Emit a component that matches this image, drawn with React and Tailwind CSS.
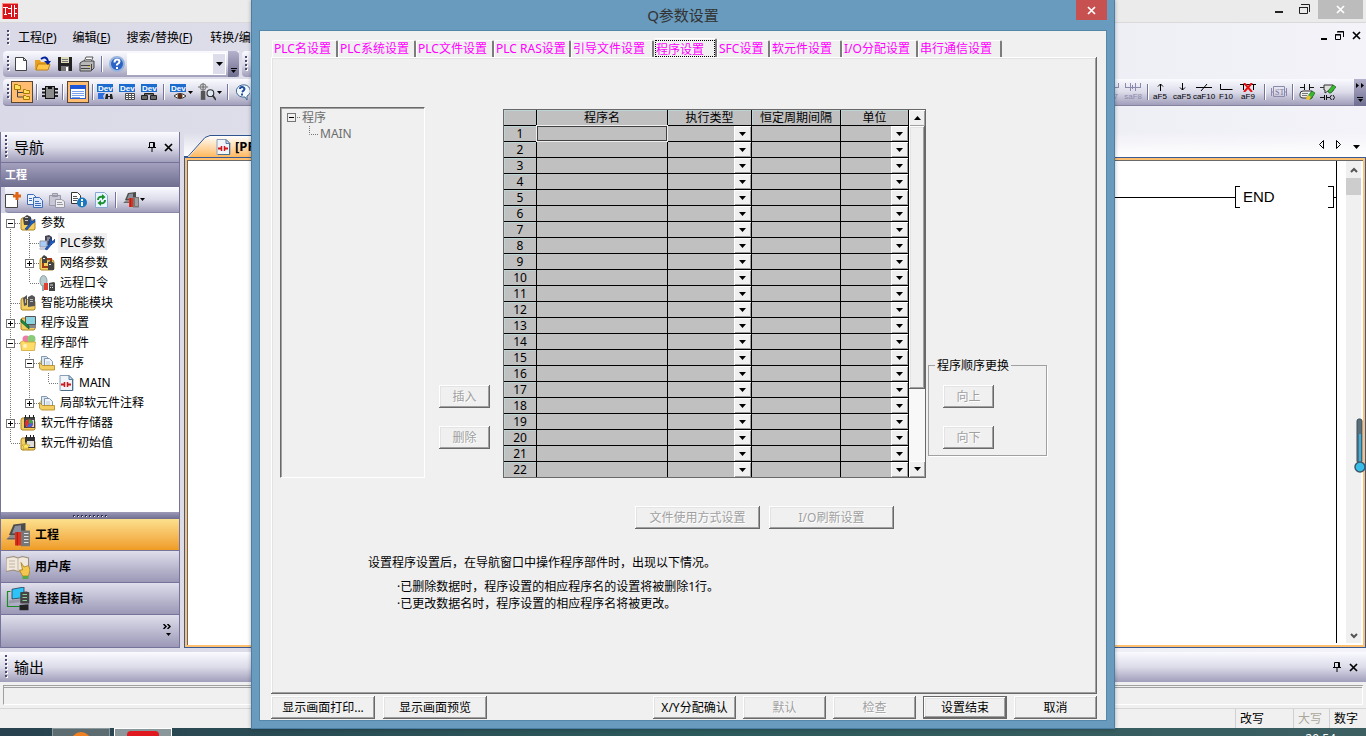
import React, { useState } from "react";

const menuItems = [
  ["工程", "P"],
  ["编辑", "E"],
  ["搜索/替换", "F"],
];

const treeRows = [
  { label: "参数", cells: ["b-"], icon: "param" },
  { label: "PLC参数", cells: ["v", "t"], icon: "plc", selected: true },
  { label: "网络参数", cells: ["v", "t+"], icon: "network" },
  { label: "远程口令", cells: ["v", "l"], icon: "remote" },
  { label: "智能功能模块", cells: ["t"], icon: "module" },
  { label: "程序设置", cells: ["t+"], icon: "setting" },
  { label: "程序部件", cells: ["t-"], icon: "parts" },
  { label: "程序", cells: ["v", "t-"], icon: "folder" },
  { label: "MAIN", cells: ["v", "v", "l"], icon: "ladder" },
  { label: "局部软元件注释", cells: ["v", "l+"], icon: "folder" },
  { label: "软元件存储器", cells: ["t+"], icon: "memory" },
  { label: "软元件初始值", cells: ["l"], icon: "initial" },
];

const tabs = [
  { label: "PLC名设置", width: "w-[66px]" },
  { label: "PLC系统设置", width: "w-[78px]" },
  { label: "PLC文件设置", width: "w-[78px]" },
  { label: "PLC RAS设置", width: "w-[77px]" },
  { label: "引导文件设置", width: "w-[83px]" },
  { label: "程序设置", width: "w-[63px]" },
  { label: "SFC设置", width: "w-[53px]" },
  { label: "软元件设置", width: "w-[72px]" },
  { label: "I/O分配设置", width: "w-[76px]" },
  { label: "串行通信设置", width: "w-[84px]" },
];

const ladderKeys = [
  { text: "aF5", d: "M8.500 8V1M6 3.500l2.500-2.500 2.500 2.500" },
  { text: "caF5", d: "M8.500 0v7M6 4.500l2.500 2.500 2.500-2.500" },
  { text: "caF10", d: "M0 4.500h16M5 8l6-7" },
  { text: "F10", d: "M2.500 1v5.500h12" },
  { text: "aF9", d: "M0 1.500h16M3.500 1v6M13.500 1v6", cross: true },
];

const barBg = "bg-linear-to-b from-[#fafaff] via-[#dcdcea] to-[#a09eba]";
const raised =
  "shadow-[inset_-1px_-1px_#696969,inset_1px_1px_#fff,inset_-2px_-2px_#a0a0a0,inset_2px_2px_#e3e3e3]";

/* ---------- icons ---------- */

function Folder() {
  return (
    <path d="M1 7V5l1-2h4l2 2h6l1 2v7l-1 1H2l-1-1z" fill="#f3cf62" stroke="#b08420" />
  );
}

function Icon({ name, size = 16 }) {
  const art = {
    app: (
      <>
        <rect width="16" height="16" fill="#d8141c" />
        <path d="M0 0h16v1H1v15H0z" fill="#ff8a80" />
        <path d="M1 4.500h5M3.500 5v7M2 11.500h3M6 5.500h4M12 5.500h3M6 10.500h4M12 10.500h3M9.500 2v12M12.500 2v12" stroke="#fff" fill="none" />
      </>
    ),
    newFile: (
      <path d="M2.500 1.500h8l3 3v10h-11zM10.500 1.500v3h3" fill="#fff" stroke="#444" />
    ),
    open: (
      <>
        <path d="M0 4h5l1 2h7v8H0z" fill="#e8a020" />
        <path d="M1 14l2-6h12l-2 6z" fill="#ffc64a" stroke="#c07f14" />
        <path d="M6 3q5-4 7 2" fill="none" stroke="#00249c" strokeWidth="2" />
        <path d="M9 5h7l-3 4z" fill="#00249c" />
      </>
    ),
    save: (
      <>
        <path d="M1 1h14v14H2l-1-1z" fill="#222" />
        <rect x="4" y="1" width="8" height="6" fill="#dcdcb8" />
        <path d="M5 3.500h6M5 5.500h6" stroke="#777" />
        <rect x="4" y="10" width="8" height="5" fill="#777" />
        <rect x="9" y="11" width="2" height="4" fill="#fff" />
      </>
    ),
    print: (
      <>
        <path d="M5 6l2-5h7l-2 5z" fill="#fff" stroke="#555" />
        <path d="M7 3.500h5" stroke="#777" />
        <path d="M1 7l3-2h11v7l-3 3H1z" fill="#b8b8b8" stroke="#444" />
        <path d="M2 9.500h9M2 12.500h9M12.500 8v6" stroke="#444" />
        <rect x="9" y="10" width="2" height="1" fill="#e8c020" />
      </>
    ),
    help: (
      <>
        <circle cx="8" cy="8" r="7" fill="#2b64c4" stroke="#9ab4dc" strokeWidth="2" />
        <path d="M5.500 6.500q0-3 2.500-3t2.500 2q0 1.500-2.500 3v1M8 11v2" fill="none" stroke="#fff" strokeWidth="2" />
      </>
    ),
    treeView: (
      <>
        <path d="M3.500 5v8H9M3.500 8.500H9" stroke="#444" fill="none" />
        <path d="M.5.5h3l1 1h2v4h-6zM9.500 5.500h2l1 1h3v3h-6zM9.500 11.500h2l1 1h3v3h-6z" fill="#ffe060" stroke="#a87800" />
      </>
    ),
    chip: (
      <>
        <path d="M0 5h16M0 8.500h16M0 12h16" stroke="#222" strokeWidth="2" />
        <rect x="3.500" y="2.500" width="9" height="12" fill="#8b8b8b" stroke="#111" />
        <path d="M6 2h4v3H6z" fill="#111" />
      </>
    ),
    windowList: (
      <>
        <rect x=".5" y="1.500" width="15" height="13" fill="#fff" stroke="#2a5fd0" />
        <rect x="0" y="1" width="16" height="4" fill="#1d56d8" />
        <path d="M2 7.500h12M2 9.500h12M2 11.500h12M2 13.500h8" stroke="#7aa2ea" />
      </>
    ),
    question: (
      <>
        <path d="M8 1a7 6 0 1 0 3 12l2 3v-4A7 6 0 0 0 8 1z" fill="#f4f8ff" stroke="#3c6a94" />
        <path d="M6 5q0-2 2-2t2.500 2q0 1-2.500 3M8 9.500v2" fill="none" stroke="#1f4f9c" strokeWidth="2" />
      </>
    ),
    tower: (
      <>
        <path d="M4.500 0v7M0 3.500h9" stroke="#666" />
        <circle cx="4.500" cy="3.500" r="2.500" fill="none" stroke="#888" />
        <rect x="2.500" y="7" width="4" height="8" fill="#555" />
        <circle cx="11" cy="9" r="3" fill="#dfe8f2" stroke="#333" />
        <path d="M13 11l3 4" stroke="#333" strokeWidth="1.500" />
      </>
    ),
    ladder: (
      <>
        <path d="M2 .5h9l4 4v11H2z" fill="#f0f5fa" stroke="#8aa0b8" />
        <path d="M11 .5v4h4z" fill="#c8dcf0" stroke="#5c7c9c" />
        <path d="M14.500 5v10.500H3" fill="none" stroke="#4c6c8c" />
        <path d="M3 9.500h3M10 9.500h3" stroke="#d01818" strokeWidth="2" />
        <path d="M6.500 7v5M9.500 7v5" stroke="#d01818" strokeWidth="1.500" />
      </>
    ),
    addFile: (
      <>
        <path d="M.5 2.500h8l4 4v9H.5z" fill="#fff" stroke="#444" />
        <path d="M12 0v8M8 4h8" stroke="#e06414" strokeWidth="3" />
      </>
    ),
    copy: (
      <>
        <path d="M.5 2.500h6l3 3v7h-9z" fill="#eef4ff" stroke="#3c6cb8" />
        <path d="M6.500 5.500h6l3 3v7h-9z" fill="#dce8ff" stroke="#3c6cb8" />
        <path d="M8 9.500h4M8 11.500h6M8 13.500h6M2 6.500h3M2 8.500h3" stroke="#3c6cb8" />
      </>
    ),
    paste: (
      <>
        <path d="M.5 3.500h11v10H.5zM3.500 1.500h5v3h-5z" fill="#c8c8d4" stroke="#9898a8" />
        <path d="M6.500 7.500h6l3 2v6h-9z" fill="#eee" stroke="#9898a8" />
        <path d="M8 10.500h5M8 12.500h6" stroke="#9898a8" />
      </>
    ),
    info: (
      <>
        <path d="M.5.5h6l3 3v8h-9z" fill="#fff" stroke="#333" />
        <path d="M2 4.500h4M2 6.500h5M2 8.500h4" stroke="#555" />
        <circle cx="11" cy="10.500" r="5" fill="#1878c0" />
        <path d="M11 7v2M11 10v4" stroke="#fff" strokeWidth="2" />
      </>
    ),
    refresh: (
      <>
        <path d="M2.500.5h9l3 3v12h-12z" fill="#e8f4ff" stroke="#88a8d0" />
        <path d="M5 8q0-4 5-3M12 8q0 4-5 3" fill="none" stroke="#18902c" strokeWidth="2" />
        <path d="M9 2l3.500 3L9 8zM8 8l-3.500 3L8 14z" fill="#18902c" />
      </>
    ),
    device: (
      <>
        <path d="M5 1l8-1v8H2z" fill="#4c4c4c" />
        <path d="M6 2l4-.5v5L4 7z" fill="#8c909c" />
        <path d="M0 11l3-3h8v3z" fill="#8c8c8c" />
        <path d="M1 10.500h8" stroke="#444" strokeWidth=".5" />
        <rect x="6" y="6" width="4" height="9" fill="#e03020" />
        <path d="M7.500 6v9" stroke="#a01c10" strokeWidth=".7" />
        <rect x="10" y="5" width="6" height="10.500" fill="#777" />
        <path d="M12 7h3M12 9h3M12 11h3M12 13h3" stroke="#ddd" strokeWidth=".8" />
      </>
    ),
    param: (
      <>
        <Folder />
        <path d="M3 3l4-3 4 2v8H4z" fill="#444" />
        <path d="M5 2h3v1H5zM5 5h3v1H5z" fill="#ccc" />
        <path d="M5 14l5-6-1-3 2-2v3h2l2-2v3l-3 2-5 6z" fill="#1c5cc0" stroke="#0c2c70" strokeWidth=".5" />
      </>
    ),
    plc: (
      <>
        <path d="M6 1l4-1 3 2v8H6z" fill="#445" />
        <path d="M8 3h3M8 5h2" stroke="#ccc" />
        <path d="M1 6h7v6H1z" fill="#a8ccf8" stroke="#99a" />
        <path d="M0 13h8v2H1z" fill="#c8c8dc" />
        <path d="M6 14l5-6-1-3 2-2v3h2l2-2v3l-3 2-5 6z" fill="#1c5cc0" stroke="#0c2c70" strokeWidth=".5" />
      </>
    ),
    network: (
      <>
        <Folder />
        <path d="M4 4h8v8H4z" fill="none" stroke="#a03c18" strokeWidth="2" />
        <path d="M3 2l2-2 3 2v6H3zM9 7l3-1 3 2v7H9z" fill="#444" />
        <path d="M4 3h2v1H4zM10 9h2v1h-2z" fill="#eee" />
      </>
    ),
    remote: (
      <>
        <ellipse cx="4.500" cy="6" rx="3.500" ry="5.500" fill="#b8ccd0" stroke="#8ca0a4" />
        <path d="M3 10h2v6H3z" fill="#98a8ac" />
        <rect x="5" y="8" width="4" height="7" fill="#e04030" />
        <path d="M10 8l5-1 1 1v8h-6z" fill="#444" />
        <path d="M11 10h3M11 12.500h1M13 12.500h1" stroke="#ddd" />
      </>
    ),
    module: (
      <>
        <Folder />
        <path d="M3 3l4-3v10l-3 1zM8 2l4-2 3 2v9l-7 1z" fill="#555" />
        <path d="M5.500 4v4M10 4.500h3M10 6.500h3" stroke="#bbb" />
      </>
    ),
    setting: (
      <>
        <Folder />
        <path d="M5.500 1.500h10v8h-10z" fill="#8cd4e0" stroke="#555" />
        <path d="M5 10h11v3H7z" fill="#888" />
        <path d="M1 4l8 7v3L1 7z" fill="#1c8c48" stroke="#0c5828" strokeWidth=".7" />
      </>
    ),
    parts: (
      <>
        <circle cx="6" cy="4" r="3.500" fill="#ec7ca4" />
        <circle cx="11.500" cy="4" r="4" fill="#88cc78" />
        <path d="M.5 7l3-1 2 1h10l-1 8.500H1.500z" fill="#ffdc68" stroke="#c89c28" strokeWidth=".7" />
        <circle cx="5" cy="11" r="2" fill="#fff4c0" />
      </>
    ),
    folder: (
      <>
        <path d="M1 6l2-2v8H1z" fill="#f3cf62" />
        <path d="M2.500 13V1.500h5l2 2V13z" fill="#dce8f4" stroke="#68829c" strokeWidth=".8" />
        <path d="M5.500 13V3.500h5l3 3V13z" fill="#eef4fa" stroke="#68829c" strokeWidth=".8" />
        <path d="M8 6v6M10 6v6" stroke="#9ab0c4" strokeWidth=".6" />
        <path d="M.5 7.500l3 3h12V15H2.500l-2-2z" fill="#f3cf62" stroke="#b08420" strokeWidth=".8" />
      </>
    ),
    memory: (
      <>
        <Folder />
        <rect x="4" y="2" width="11" height="11" fill="#444" />
        <path d="M5.500 0v3M9.500 0v3M13.500 0v3" stroke="#222" />
        <path d="M6 5h8v7H6z" fill="#ddd" />
        <circle cx="9" cy="8.500" r="4" fill="#e03030" />
        <path d="M9 8.500v-4a4 4 0 0 1 4 4z" fill="#30a850" />
        <path d="M9 8.500h4a4 4 0 0 1-6 3z" fill="#3868e0" />
      </>
    ),
    initial: (
      <>
        <Folder />
        <rect x="5" y="2" width="10" height="11" fill="#333" />
        <path d="M6.500 0v3M10.500 0v3M13.500 0v3" stroke="#222" />
        <path d="M7 6h7v6H7z" fill="#ddd" />
        <path d="M6 7l1 3h3l-2 2 1 3-3-2-3 2 1-3-2-2h3z" fill="#ffe860" stroke="#a88418" strokeWidth=".5" />
      </>
    ),
    book: (
      <>
        <path d="M0 2l5-1 3 1 3-1 4 1v9l-4-1-3 1-3-1-5 1z" fill="#f0e8dc" stroke="#9c8c78" strokeWidth=".7" />
        <path d="M8 2v9M2 4h4M2 6h4M2 8h4" stroke="#b4a490" strokeWidth=".5" />
        <path d="M10 5l2 3 3-1 1 3-1 4h-4l-2-4 2 0z" fill="#f4c850" stroke="#a07c18" strokeWidth=".5" />
        <path d="M11 14h4v2h-4z" fill="#58a848" />
      </>
    ),
    link: (
      <>
        <path d="M3 3H1v10h8" fill="none" stroke="#188c20" strokeWidth=".8" />
        <path d="M4 1.500l8-1.500v7l-8 1z" fill="#2cc4f8" stroke="#234" strokeWidth=".5" />
        <path d="M2 9l8-1v2l-8 1z" fill="#99a" />
        <path d="M9.500 3.500l4-.5 2 .5V11h-6z" fill="#444" />
        <path d="M11 5h3M11 7h3M11 9h3" stroke="#8c9" strokeWidth=".7" />
        <path d="M9 12l6-.5v4H9z" fill="#222" />
      </>
    ),
    editRung: (
      <>
        <path d="M1 3.500h4M11 3.500h4M5.500 0v6M10.500 0v6" stroke="#111" fill="none" />
        <path d="M1 10q0-3 3-3h9v7H4q-3 0-3-2z" fill="#eee" stroke="#333" />
        <path d="M3 9.500h6M3 11.500h5" stroke="#777" />
        <path d="M8 13l5-6 3 2-4 6H9z" fill="#38b830" stroke="#185c18" strokeWidth=".7" />
        <path d="M7 14l2-3 3 2-2 3H8z" fill="#f0c030" />
      </>
    ),
    editLine: (
      <>
        <path d="M0 3.500h4M4 1h9v6H8L5 9V6H4z" fill="#ddd" stroke="#333" />
        <path d="M8 7l5-6 3 2-5 6H9z" fill="#38b830" stroke="#185c18" strokeWidth=".7" />
        <path d="M0 13.500h4M7 13.500h3M4.500 11v5M6.500 11v5M11.500 11q-3 2.500 0 5M13 11q3 2.500 0 5" stroke="#111" fill="none" />
      </>
    ),
  };
  return (
    <svg width={size} height={size} viewBox="0 0 16 16" className="shrink-0" aria-hidden="true">
      {art[name]}
    </svg>
  );
}

function DevIcon({ kind }) {
  return (
    <svg width="17" height="16" viewBox="0 0 17 16" className="shrink-0" aria-hidden="true">
      <rect width="16" height="8" fill="#1c6cd0" />
      <text x="1" y="7" fontSize="8" fontWeight="bold" fontFamily="Liberation Sans, sans-serif" fill="#fff">Dev</text>
      {kind === "find" && (
        <>
          <path d="M1 9h7l-2 3 1 3H1z" fill="#2c6cdc" />
          <path d="M8 15l1-5h2v2h2v-2h2l1 5h-3v-2h-2v2z" fill="#222" />
        </>
      )}
      {kind === "table" && (
        <>
          <path d="M6.500 9.500h9v6h-9z" fill="#fff" stroke="#444" />
          <path d="M6 11.500h10M6 13.500h10M9.500 10v6M12.500 10v6" stroke="#555" />
        </>
      )}
      {kind === "batch" && (
        <path d="M.5 11.500h6v4h-6zM9.500 11.500h6v4h-6zM3.500 11V9.500h9V11" fill="#666" stroke="#222" />
      )}
      {kind === "eye" && (
        <>
          <path d="M4 12q6-5 12 0-6 5-12 0z" fill="#fff" stroke="#333" />
          <circle cx="10" cy="12" r="2.500" fill="#5c2c14" />
        </>
      )}
    </svg>
  );
}

function Grip({ rows = 5 }) {
  return (
    <svg width="4" height={rows * 4} className="shrink-0" aria-hidden="true">
      {Array.from({ length: rows }, (_, i) => (
        <g key={i}>
          <rect x="1" y={i * 4 + 1} width="2" height="2" fill="#fff" />
          <rect x="0" y={i * 4} width="2" height="2" fill="#4c4a72" />
        </g>
      ))}
    </svg>
  );
}

function Arrow({ up = false, small = false }) {
  return (
    <svg width={small ? 5 : 7} height={small ? 3 : 4} viewBox="0 0 7 4" className="shrink-0" aria-hidden="true">
      <path d={up ? "M0 4h7L3.500 0z" : "M0 0h7L3.500 4z"} fill="#000" />
    </svg>
  );
}

function Sep() {
  return <span className="h-4 w-[2px] shrink-0 border-l border-[#75739a] bg-white" />;
}

function CloseX({ className }) {
  return (
    <svg width="9" height="9" viewBox="0 0 9 9" className={className} aria-hidden="true">
      <path d="M1 1l7 7M8 1L1 8" stroke="currentColor" strokeWidth="1.700" />
    </svg>
  );
}

function Pin() {
  return (
    <svg width="8" height="10" viewBox="0 0 8 10" aria-hidden="true">
      <path d="M1.500 5.500v-5h5v5M0 5.500h8M4 6v4M5.500 1v4" stroke="#000" fill="none" />
    </svg>
  );
}

function ToolButton({ label, active, children }) {
  return (
    <button
      aria-label={label}
      className={
        active
          ? "flex h-[22px] w-[22px] shrink-0 items-center justify-center border border-[#5a4630] bg-[#ffbd72]"
          : "flex shrink-0 items-center gap-px"
      }
    >
      {children}
    </button>
  );
}

/* ---------- main window ---------- */

function TitleBar() {
  return (
    <div className="flex h-[23px] shrink-0 justify-between border-b border-[#d9d9d9] bg-[#ebebeb]">
      <div className="px-[2px] pt-[3px]">
        <Icon name="app" />
      </div>
      <div className="flex items-start pr-[3px]">
        <button aria-label="最小化" className="px-4 pt-[11px] pb-2">
          <span className="block h-[2px] w-2 bg-[#222]" />
        </button>
        <button aria-label="还原" className="pt-1 pr-2">
          <svg width="11" height="11" viewBox="0 0 11 11">
            <path d="M.5 3.500h8v6h-8zM0 3.500h9M2 .5h8.500V8" fill="none" stroke="#222" />
          </svg>
        </button>
        <button aria-label="关闭" className="flex h-[19px] w-[45px] items-center justify-center bg-[#bcbcbc] text-white">
          <CloseX />
        </button>
      </div>
    </div>
  );
}

function MenuBar() {
  return (
    <div className="flex h-7 shrink-0 items-center justify-between pr-[5px] pl-[7px]">
      <nav className="flex items-center gap-4 pt-px leading-5">
        <div className="flex items-center gap-[7px]">
          <Grip rows={4} />
          <button>{menuItems[0][0]}(<u>{menuItems[0][1]}</u>)</button>
        </div>
        {menuItems.slice(1).map(([name, key]) => (
          <button key={name}>{name}(<u>{key}</u>)</button>
        ))}
        <button className="pl-[2px]">转换/编译(<u>C</u>)</button>
      </nav>
      <div className="mb-1 flex items-center gap-2">
        <span className="mt-2 h-[2px] w-[6px] bg-black" />
        <svg width="9" height="9" viewBox="0 0 9 9" aria-hidden="true">
          <path d="M.5 3.500h5v5h-5zM0 4h6M2.500.5h6V6M2 1h7" fill="none" stroke="#000" />
        </svg>
        <CloseX />
      </div>
    </div>
  );
}

function Toolbars() {
  return (
    <>
      <div className="flex h-[26px] shrink-0 gap-[3px] pl-[3px]">
        <div className={"flex items-center rounded-l-sm pl-1 " + barBg}>
          <Grip rows={4} />
          <div className="flex items-center gap-[6px] pl-[2px]">
            <ToolButton label="新建"><Icon name="newFile" /></ToolButton>
            <ToolButton label="打开"><Icon name="open" /></ToolButton>
            <ToolButton label="保存"><Icon name="save" /></ToolButton>
            <ToolButton label="打印"><Icon name="print" /></ToolButton>
            <Sep />
            <ToolButton label="帮助"><Icon name="help" /></ToolButton>
          </div>
          <label className="relative ml-[2px] block h-[22px] w-[99px] bg-white">
            <select aria-label="查找" className="h-full w-full appearance-none" />
            <span className="pointer-events-none absolute inset-y-px right-px flex w-3 items-center justify-center bg-[#dcdcea]">
              <Arrow />
            </span>
          </label>
          <div className="ml-[2px] flex h-full w-[11px] flex-col items-center justify-end gap-px rounded-r-sm bg-linear-to-b from-[#b4b2cc] to-[#706e90] pb-1">
            <span className="h-px w-[6px] bg-black" />
            <Arrow small />
          </div>
        </div>
        <div className={"flex w-[260px] items-center rounded-l-sm pl-[3px] " + barBg}>
          <Grip rows={4} />
        </div>
      </div>

      <div className={"mt-[2px] ml-[3px] flex h-[27px] shrink-0 items-center justify-between rounded-l-sm border-b border-[#85839f] pl-1 " + barBg}>
        <div className="flex items-center gap-[5px]">
          <div className="flex items-center gap-[3px]">
            <div className="flex items-center">
              <Grip rows={4} />
              <ToolButton label="导航窗口" active><Icon name="treeView" /></ToolButton>
            </div>
            <Sep />
            <div className="px-px">
              <ToolButton label="模块"><Icon name="chip" /></ToolButton>
            </div>
            <Sep />
            <ToolButton label="输出窗口" active><Icon name="windowList" /></ToolButton>
            <Sep />
            <ToolButton label="软元件搜索"><DevIcon kind="find" /></ToolButton>
          </div>
          <ToolButton label="软元件列表"><DevIcon kind="table" /></ToolButton>
          <ToolButton label="软元件批量"><DevIcon kind="batch" /></ToolButton>
          <Sep />
          <ToolButton label="监视"><DevIcon kind="eye" /><Arrow small /></ToolButton>
          <ToolButton label="诊断"><Icon name="tower" size={18} /><Arrow small /></ToolButton>
          <Sep />
          <ToolButton label="帮助"><Icon name="question" /></ToolButton>
        </div>
        <div className="flex h-full items-center gap-[5px] font-['Liberation_Sans',sans-serif] text-[8px] leading-[9px] text-black">
          <button className="flex flex-col items-center text-[#8c8aac]">
            <svg width="16" height="9"><path d="M0 4.500h6M10 4.500h6M5.500 0v8M10.500 0v8M15.500 0v5M2.500 0v4" stroke="currentColor" fill="none" /></svg>
            sF7
          </button>
          <button className="flex flex-col items-center text-[#8c8aac]">
            <svg width="16" height="9"><path d="M0 4.500h16M5.500 0v8M10.500 0v8M15.500 0v5M.5 0v4M7.500 2v4" stroke="currentColor" fill="none" /></svg>
            saF8
          </button>
          <div className="flex items-center">
            <Sep />
            {ladderKeys.map((k) => (
              <button key={k.text} className="flex w-[22px] flex-col items-center whitespace-nowrap">
                <svg width="16" height="9">
                  <path d={k.d} stroke="#000" fill="none" />
                  {k.cross && <path d="M4 0l8 9M12 0L4 9" stroke="#e81010" strokeWidth="2" />}
                </svg>
                {k.text}
              </button>
            ))}
          </div>
          <Sep />
          <button aria-label="ST">
            <svg width="16" height="16" viewBox="0 0 16 16">
              <path d="M2.500 2.500h11v10h-11zM.5 4v8M15.500 4v8M0 8h2M14 8h2" fill="none" stroke="#8c8aac" />
              <text x="4" y="11" fontSize="8" fontFamily="Liberation Serif, serif" fill="#75739a">ST</text>
            </svg>
          </button>
          <Sep />
          <button aria-label="编辑梯形图"><Icon name="editRung" /></button>
          <button aria-label="编辑划线"><Icon name="editLine" /></button>
          <div className="ml-[13px] flex h-[27px] w-3 flex-col items-center justify-between bg-linear-to-b from-[#b4b2cc] to-[#706e90] py-1">
            <svg width="8" height="5"><path d="M0 0l3 2.500-3 2.500zM5 0l3 2.500-3 2.500z" fill="#000" /></svg>
            <span className="flex flex-col items-center gap-px">
              <span className="h-px w-[6px] bg-black" />
              <Arrow small />
            </span>
          </div>
        </div>
      </div>
    </>
  );
}

function TreeCell({ kind }) {
  const line = kind[0];
  const box = kind[1];
  const vertical = { v: "M9.500 0v20", t: "M9.500 0v20", l: "M9.500 0v10", b: "M9.500 10v10" }[line];
  return (
    <svg width="19" height="20" className="shrink-0" aria-hidden="true">
      <path d={vertical + (line === "v" ? "" : "M10 10.500h9")} stroke="#777" strokeDasharray="1 1" fill="none" />
      {box && (
        <>
          <rect x="5.500" y="6.500" width="8" height="8" fill="#fff" stroke="#777" />
          <path d={box === "+" ? "M7 10.500h5M9.500 8v5" : "M7 10.500h5"} stroke="#000" />
        </>
      )}
    </svg>
  );
}

function NavPanel() {
  const [selected, setSelected] = useState("工程");
  const groups = [
    ["工程", "device"],
    ["用户库", "book"],
    ["连接目标", "link"],
  ];
  return (
    <aside className="flex w-[180px] shrink-0 flex-col border-x border-[#75739a]">
      <div className={"flex h-[30px] shrink-0 items-center pr-[6px] pl-1 " + barBg}>
        <Grip rows={6} />
        <h2 className="flex-1 pl-[5px] text-[15px] leading-5">导航</h2>
        <div className="flex items-center gap-2">
          <Pin />
          <CloseX />
        </div>
      </div>
      <div className="flex h-[25px] shrink-0 items-center border-t border-[#75739a] bg-linear-to-b from-[#a3a1bd] to-[#706e90] pl-1 text-[11px] font-bold text-white">
        工程
      </div>
      <div className="shrink-0 bg-[#d4d4e4] pl-1">
        <div className={"flex h-[26px] items-center gap-[6px] rounded-bl border-b border-[#8b89aa] " + barBg}>
          <ToolButton label="新建数据"><Icon name="addFile" /></ToolButton>
          <ToolButton label="复制"><Icon name="copy" /></ToolButton>
          <ToolButton label="粘贴"><Icon name="paste" /></ToolButton>
          <ToolButton label="属性"><Icon name="info" /></ToolButton>
          <ToolButton label="刷新"><Icon name="refresh" /></ToolButton>
          <Sep />
          <ToolButton label="设备"><Icon name="device" /><Arrow small /></ToolButton>
        </div>
      </div>
      <ul className="min-h-0 flex-1 overflow-hidden bg-white">
        {treeRows.map((row) => (
          <li key={row.label} className="flex h-5 items-center">
            {row.cells.map((cell, i) => (
              <TreeCell key={i} kind={cell} />
            ))}
            <Icon name={row.icon} />
            <span className={row.selected ? "ml-[3px] bg-[#f0f0f0] px-[2px] leading-5" : "ml-[3px] px-[2px] leading-5"}>
              {row.label}
            </span>
          </li>
        ))}
      </ul>
      <div className="flex h-[7px] shrink-0 items-center justify-center gap-[2px] bg-linear-to-b from-[#9d9bb8] to-[#706e90]">
        {Array.from({ length: 9 }, (_, i) => (
          <span key={i} className="h-[2px] w-[2px] border-t border-l border-[#33315c] bg-white" />
        ))}
      </div>
      {groups.map(([name, icon]) => (
        <button
          key={name}
          onClick={() => setSelected(name)}
          className={
            "flex h-8 shrink-0 items-center gap-[5px] border-b border-[#75739a] bg-linear-to-b pl-[5px] font-bold " +
            (selected === name ? "from-[#fce08c] to-[#ef9c20]" : "from-[#e0dfec] to-[#9a98b6]")
          }
        >
          <Icon name={icon} size={24} />
          {name}
        </button>
      ))}
      <div className="flex h-[33px] shrink-0 flex-col items-end justify-center gap-1 border-b border-[#75739a] bg-linear-to-b from-[#e0dfec] to-[#9a98b6] pr-2 pb-[2px]">
        <svg width="8" height="5"><path d="M.5 0L3 2.500.5 5M4.500 0L7 2.500 4.500 5" fill="none" stroke="#000" strokeWidth="1.500" /></svg>
        <Arrow small />
      </div>
    </aside>
  );
}

function DocumentArea() {
  return (
    <section className="flex min-w-0 flex-1 flex-col">
      <div className="flex h-[25px] shrink-0 items-end justify-between bg-linear-to-b from-transparent to-white pr-[6px]">
        <div className="flex items-end">
          <svg width="26" height="22" aria-hidden="true">
            <defs>
              <linearGradient id="tab" x1="0" y1="0" x2="0" y2="1">
                <stop offset="0" stopColor="#fff" />
                <stop offset="1" stopColor="#ffb95e" />
              </linearGradient>
            </defs>
            <path d="M0 22h5L22 2l4-2v22z" fill="url(#tab)" />
            <path d="M0 21.500h4L21 2.500l5-2" fill="none" stroke="#31548e" />
          </svg>
          <div className="flex h-[22px] items-center gap-1 border-t border-[#31548e] bg-linear-to-b from-white to-[#ffb95e] pr-4 pl-[5px] text-[13px] font-bold">
            <Icon name="ladder" />
            [PRG]
          </div>
        </div>
        <div className="flex h-full items-center gap-3">
          <svg width="5" height="9"><path d="M4.500 .5v8l-4-4z" fill="none" stroke="#000" /></svg>
          <svg width="5" height="9"><path d="M.5 .5v8l4-4z" fill="none" stroke="#000" /></svg>
          <span className="pt-1"><Arrow /></span>
        </div>
      </div>
      <div className="flex min-h-0 flex-1 border border-[#3a5a96] bg-[#ffc070] p-[2px]">
        <div className="flex flex-1 border-t border-l border-[#696969] bg-white">
          <div className="mb-[2px] flex-1 border-r border-black pt-[25px]">
            <div className="ml-24 flex h-[22px] items-center">
              <span className="h-px flex-1 bg-black" />
              <span className="h-full w-[5px] border-y border-l border-black" />
              <span className="w-[88px] pl-[3px] font-['Liberation_Sans',sans-serif] text-[15px] leading-5">END</span>
              <span className="h-full w-[6px] border-y border-r border-black" />
              <span className="h-px w-[2px] bg-black" />
            </div>
          </div>
          <div className="mr-[2px] mb-[2px] ml-[9px] flex w-[15px] flex-col items-center bg-[#f0f0f0]">
            <svg width="8" height="17"><path d="M1 11l3-3 3 3" fill="none" stroke="#555" strokeWidth="2" /></svg>
            <span className="h-[17px] w-full bg-[#cdcdcd]" />
            <span className="flex-1" />
            <svg width="8" height="16"><path d="M1 7l3 3 3-3" fill="none" stroke="#555" strokeWidth="2" /></svg>
          </div>
        </div>
      </div>
    </section>
  );
}

function OutputPanel() {
  return (
    <section className="mt-1 shrink-0 bg-[#f0f0f0]">
      <div className={"flex h-[30px] items-center pr-2 pl-[5px] " + barBg}>
        <Grip rows={6} />
        <h2 className="flex-1 pl-[5px] text-[15px] leading-5">输出</h2>
        <div className="flex items-center gap-2">
          <Pin />
          <CloseX />
        </div>
      </div>
      <div className="mx-[3px] mt-[3px] h-5 border border-t-[3px] border-[#a0a0a0] border-r-white border-b-white [border-top-style:double]" />
      <div className="mt-[3px] flex h-5 items-stretch justify-end border-t border-[#d7d7d7] leading-5">
        <span className="w-[58px] border-l border-[#d0d0d0] pl-1">改写</span>
        <span className="w-9 border-l border-[#d0d0d0] pl-1 text-[#aca899]">大写</span>
        <span className="w-[37px] border-l border-[#d0d0d0] pl-1">数字</span>
      </div>
    </section>
  );
}

function Taskbar() {
  return (
    <footer className="flex h-2 shrink-0 items-start justify-between overflow-hidden bg-linear-to-r from-[#28424f] via-[#2c5a5c] to-[#3c5f62] pr-[30px] pl-[52px]">
      <div className="flex gap-1">
        <span className="flex h-2 w-[58px] justify-center border border-b-0 border-[#8a9a9e] bg-[#5c6c70] pt-[3px]">
          <span className="h-5 w-5 rounded-full bg-[#f08020]" />
        </span>
        <span className="flex h-2 w-[58px] justify-center border border-b-0 border-white bg-[#8a989c] pt-[2px]">
          <span className="h-5 w-8 rounded-sm bg-[#e01820]" />
        </span>
      </div>
      <time className="pt-[3px] leading-4 text-white">20:54</time>
    </footer>
  );
}

/* ---------- dialog ---------- */

function ClassicButton({ children, className, disabled, primary }) {
  return (
    <button
      disabled={disabled}
      className={
        "h-[23px] leading-4 disabled:text-[#a0a0a0] disabled:[text-shadow:1px_1px_#fff] " +
        raised + " " +
        (primary ? "border border-[#696969] " : "") +
        className
      }
    >
      {children}
    </button>
  );
}

function DropCell({ label }) {
  return (
    <td className="border-r border-b border-black p-0">
      <div className="relative h-[15px]">
        <select aria-label={label} className="block h-full w-full appearance-none outline-none" />
        <span className="pointer-events-none absolute inset-y-0 right-0 flex w-[17px] items-center justify-center bg-[#f0f0f0] pt-px shadow-[inset_1px_1px_#fff,inset_-1px_-1px_#a0a0a0]">
          <Arrow />
        </span>
      </div>
    </td>
  );
}

function ProgramTable() {
  const head = "border-r border-b border-black p-0 pt-px text-center font-normal leading-[14px] shadow-[inset_1px_1px_#bcd4d4]";
  return (
    <div className="flex w-[423px] border border-[#696969] bg-[#c0c0c0]">
      <table className="flex-1 table-fixed border-separate border-spacing-0">
        <colgroup>
          <col className="w-[33px]" />
          <col className="w-[131px]" />
          <col className="w-[84px]" />
          <col className="w-[89px]" />
          <col />
        </colgroup>
        <thead>
          <tr>
            <th className={head}></th>
            <th className={head}>程序名</th>
            <th className={head}>执行类型</th>
            <th className={head}>恒定周期间隔</th>
            <th className={head}>单位</th>
          </tr>
        </thead>
        <tbody className="[&>tr:last-child>*]:border-b-0">
          {Array.from({ length: 22 }, (_, i) => (
            <tr key={i}>
              <th className={head}>{i + 1}</th>
              <td className="border-r border-b border-black p-0">
                <input
                  aria-label={"程序名 " + (i + 1)}
                  className={
                    i === 0
                      ? "block h-[15px] w-full border border-[#404040] outline outline-[#eee]"
                      : "block h-[15px] w-full outline-none"
                  }
                />
              </td>
              <DropCell label={"执行类型 " + (i + 1)} />
              <td className="border-r border-b border-black p-0">
                <input aria-label={"恒定周期间隔 " + (i + 1)} className="block h-[15px] w-full outline-none" />
              </td>
              <DropCell label={"单位 " + (i + 1)} />
            </tr>
          ))}
        </tbody>
      </table>
      <div className="flex w-4 flex-col bg-[#f8f8f8]">
        <button aria-label="向上滚动" className="flex h-4 items-center justify-center bg-[#f0f0f0] shadow-[inset_1px_1px_#fff,inset_-1px_-1px_#a0a0a0]">
          <Arrow up />
        </button>
        <div className={"h-[263px] bg-[#f0f0f0] " + raised} />
        <div className="flex-1" />
        <button aria-label="向下滚动" className="flex h-4 items-center justify-center bg-[#f0f0f0] shadow-[inset_1px_1px_#fff,inset_-1px_-1px_#a0a0a0]">
          <Arrow />
        </button>
      </div>
    </div>
  );
}

function ParameterDialog() {
  const [active, setActive] = useState("程序设置");
  return (
    <div
      role="dialog"
      aria-label="Q参数设置"
      className="absolute top-0 bottom-[7px] left-1/2 flex w-[864px] -translate-x-1/2 flex-col border-x border-b border-[#4a7ea4] bg-[#689bbe] px-[7px] pb-[7px] shadow-[0_0_4px_rgba(0,0,0,0.3)]"
    >
      <div className="relative flex h-[30px] shrink-0 items-center justify-center">
        <h1 className="text-[15px] leading-5 text-[#333]">Q参数设置</h1>
        <button aria-label="关闭" className="absolute top-0 right-0 flex h-5 w-[31px] items-center justify-center bg-[#c75050] text-white">
          <CloseX />
        </button>
      </div>
      <div className="flex min-h-0 flex-1 flex-col border border-[#5488a8] bg-[#f0f0f0] pt-2 pr-[9px] pb-px pl-[11px]">
        <div role="tablist" className="flex h-[18px] shrink-0 items-end pl-px">
          {tabs.map((tab) => (
            <button
              key={tab.label}
              role="tab"
              aria-selected={active === tab.label}
              onClick={() => setActive(tab.label)}
              className={
                "rounded-t-[2px] border-t border-r-2 border-t-white border-r-[#7c7c7c] text-left leading-4 whitespace-nowrap text-[#ff00ff] " +
                (active === tab.label ? "h-[19px] self-end pl-px " : "h-[17px] pl-[2px] shadow-[inset_1px_0_#fff] ") +
                tab.width
              }
            >
              {active === tab.label ? (
                <span className="block h-[17px] border border-dotted border-black leading-[17px]">{tab.label}</span>
              ) : (
                tab.label
              )}
            </button>
          ))}
        </div>
        <div className={"flex min-h-0 flex-1 flex-col pt-[50px] pl-[9px] " + raised}>
          <div className="flex items-start">
            <div className="h-[371px] w-[145px] border border-[#696969] border-r-white border-b-white pt-[2px] pl-[3px] text-[#6d6d6d] shadow-[inset_1px_1px_#a0a0a0]">
              <div className="flex h-4 items-center leading-4">
                <svg width="18" height="16" className="shrink-0" aria-hidden="true">
                  <rect x="3.500" y="3.500" width="8" height="8" fill="none" stroke="#777" />
                  <path d="M5 7.500h5" stroke="#000" />
                  <path d="M13 7.500h4" stroke="#777" strokeDasharray="1 1" />
                </svg>
                程序
              </div>
              <div className="flex h-4 items-center leading-4">
                <svg width="36" height="16" className="shrink-0" aria-hidden="true">
                  <path d="M25.500 0v8.500h9" fill="none" stroke="#777" strokeDasharray="1 1" />
                </svg>
                MAIN
              </div>
            </div>
            <div className="mt-[278px] ml-[14px] flex w-[51px] flex-col gap-[18px]">
              <ClassicButton disabled className="w-full">插入</ClassicButton>
              <ClassicButton disabled className="w-full">删除</ClassicButton>
            </div>
            <div className="mt-[2px] ml-[13px]">
              <ProgramTable />
            </div>
            <fieldset className="mt-[249px] ml-[2px] h-[100px] w-[119px] border border-[#a0a0a0] pl-[14px] shadow-[1px_1px_#fff]">
              <legend className="-ml-2 px-[2px] pt-[2px] leading-4">程序顺序更换</legend>
              <div className="flex flex-col gap-[18px] pt-[11px]">
                <ClassicButton disabled className="w-[51px]">向上</ClassicButton>
                <ClassicButton disabled className="w-[51px]">向下</ClassicButton>
              </div>
            </fieldset>
          </div>
          <div className="mt-7 flex gap-[9px] pl-[355px]">
            <ClassicButton disabled className="w-[125px]">文件使用方式设置</ClassicButton>
            <ClassicButton disabled className="w-[125px]">I/O刷新设置</ClassicButton>
          </div>
          <div className="mt-[25px] pl-[88px] leading-[17px]">
            <p>设置程序设置后，在导航窗口中操作程序部件时，出现以下情况。</p>
            <ul className="mt-[7px] pl-[29px]">
              <li>·已删除数据时，程序设置的相应程序名的设置将被删除1行。</li>
              <li>·已更改数据名时，程序设置的相应程序名将被更改。</li>
            </ul>
          </div>
        </div>
        <div className="mt-[2px] flex shrink-0 justify-between">
          <div className="flex gap-2">
            <ClassicButton className="w-[104px]">显示画面打印...</ClassicButton>
            <ClassicButton className="w-[104px]">显示画面预览</ClassicButton>
          </div>
          <div className="flex gap-[7px]">
            <ClassicButton className="w-[83px]">X/Y分配确认</ClassicButton>
            <ClassicButton disabled className="w-[83px]">默认</ClassicButton>
            <ClassicButton disabled className="w-[83px]">检查</ClassicButton>
            <ClassicButton primary className="w-[84px]">设置结束</ClassicButton>
            <ClassicButton className="w-[83px]">取消</ClassicButton>
          </div>
        </div>
      </div>
    </div>
  );
}

export default function App() {
  return (
    <div className="relative flex h-screen flex-col overflow-hidden bg-linear-to-r from-[#d9d9e7] to-[#f3f3f9] font-['Noto_Sans','Noto_Sans_CJK_SC',sans-serif] text-xs text-black">
      <TitleBar />
      <MenuBar />
      <Toolbars />
      <main className="mt-[26px] flex min-h-0 flex-1 gap-1">
        <NavPanel />
        <DocumentArea />
      </main>
      <OutputPanel />
      <Taskbar />
      <svg width="12" height="56" className="absolute right-0 bottom-[262px]" aria-hidden="true">
        <rect x="3" y="1" width="5" height="44" rx="2" fill="#5c707c" stroke="#3c4c58" />
        <rect x="5" y="16" width="2" height="30" fill="#30b4e8" />
        <circle cx="6" cy="49" r="5" fill="#38bce8" stroke="#3c5868" strokeWidth="1.500" />
      </svg>
      <ParameterDialog />
    </div>
  );
}
